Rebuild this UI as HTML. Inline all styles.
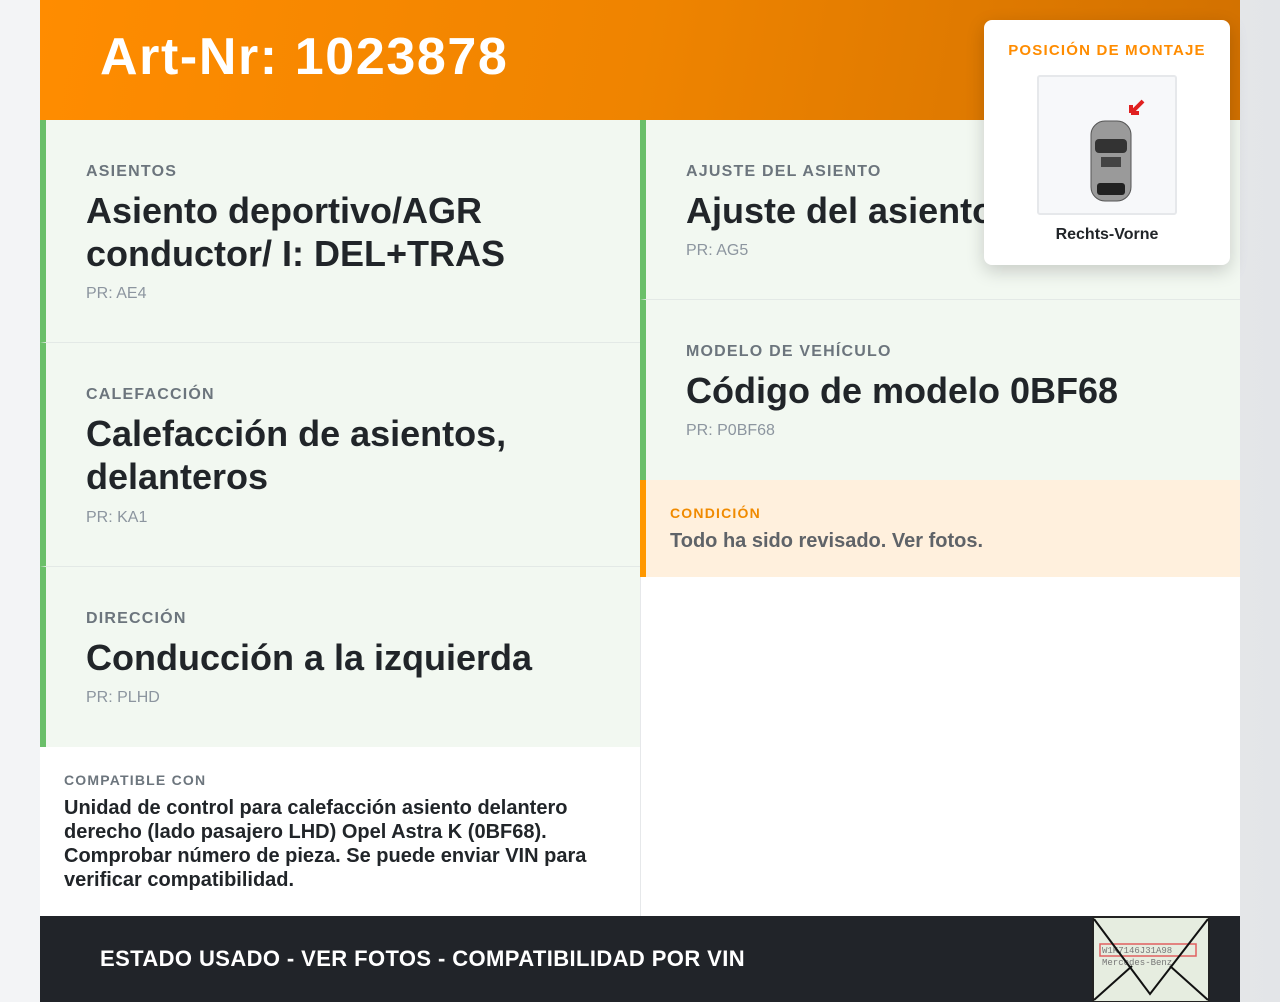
<!DOCTYPE html>
<html><head><meta charset="utf-8"><style>
*{margin:0;padding:0;box-sizing:border-box}
body{width:1280px;height:1002px;background:linear-gradient(90deg,#f3f4f6,#eef0f2 50%,#e3e5e8);font-family:"Liberation Sans",sans-serif;position:relative;overflow:hidden}
.page{position:absolute;left:40px;top:0;width:1200px;height:1002px;background:#fff}
.hdr{position:absolute;left:0;top:0;width:1200px;height:120px;background:linear-gradient(100deg,#ff8c00,#ef8400 50%,#d27100)}
.hdr h1{position:absolute;left:60px;top:27px;font-size:52px;color:#fff;font-weight:bold;letter-spacing:1.6px}
.card{position:absolute;background:#f2f8f1;border-left:6px solid #6abf69;border-bottom:1px solid #e3e9e6}
.lab{position:absolute;left:40px;font-size:16px;font-weight:bold;color:#6c757d;letter-spacing:1.2px}
.ttl{position:absolute;left:40px;font-size:36px;font-weight:bold;color:#212529;line-height:43px}
.pr{position:absolute;left:40px;font-size:16px;color:#8c959f}
.cond{position:absolute;left:600px;top:480px;width:600px;height:97px;background:#fff0dd;border-left:6px solid #ff9800}
.foot{position:absolute;left:0;top:916px;width:1200px;height:86px;background:#212429}
.foot span{position:absolute;left:60px;top:30px;color:#fff;font-size:22px;font-weight:bold;letter-spacing:0.4px}
.pop{position:absolute;left:984px;top:20px;width:246px;height:245px;background:#fff;border-radius:8px;box-shadow:0 6px 18px rgba(0,0,0,.18)}
</style></head><body>
<div class="page">
<div class="hdr"><h1>Art-Nr: 1023878</h1></div>
<div class="card" style="left:0;top:120px;width:600px;height:223px"><div class="lab" style="top:43px">ASIENTOS</div><div class="ttl" style="top:69px">Asiento deportivo/AGR<br>conductor/ I: DEL+TRAS</div><div class="pr" style="top:165px">PR: AE4</div></div>
<div class="card" style="left:0;top:343px;width:600px;height:224px"><div class="lab" style="top:43px">CALEFACCIÓN</div><div class="ttl" style="top:69px">Calefacción de asientos,<br>delanteros</div><div class="pr" style="top:166px">PR: KA1</div></div>
<div class="card" style="left:0;top:567px;width:600px;height:180px;border-bottom:none"><div class="lab" style="top:43px">DIRECCIÓN</div><div class="ttl" style="top:69px">Conducción a la izquierda</div><div class="pr" style="top:122px">PR: PLHD</div></div>
<div class="card" style="left:600px;top:120px;width:600px;height:180px"><div class="lab" style="top:43px">AJUSTE DEL ASIENTO</div><div class="ttl" style="top:69px">Ajuste del asiento</div><div class="pr" style="top:122px">PR: AG5</div></div>
<div class="card" style="left:600px;top:300px;width:600px;height:180px;border-bottom:none"><div class="lab" style="top:43px">MODELO DE VEHÍCULO</div><div class="ttl" style="top:69px">Código de modelo 0BF68</div><div class="pr" style="top:122px">PR: P0BF68</div></div>
<div class="cond"><div style="position:absolute;left:24px;top:25px;font-size:14px;font-weight:bold;color:#f08a00;letter-spacing:1.2px">CONDICIÓN</div><div style="position:absolute;left:24px;top:50px;font-size:20px;font-weight:bold;color:#5f6368">Todo ha sido revisado. Ver fotos.</div></div>
<div style="position:absolute;left:600px;top:577px;width:1px;height:339px;background:#e6e8ea"></div>
<div style="position:absolute;left:24px;top:772px;font-size:14px;font-weight:bold;color:#6c757d;letter-spacing:1.2px">COMPATIBLE CON</div>
<div style="position:absolute;left:24px;top:796px;width:560px;font-size:20px;font-weight:bold;color:#212529;line-height:24px">Unidad de control para calefacción asiento delantero derecho (lado pasajero LHD) Opel Astra K (0BF68). Comprobar número de pieza. Se puede enviar VIN para verificar compatibilidad.</div>
<div class="foot"><span>ESTADO USADO - VER FOTOS - COMPATIBILIDAD POR VIN</span>
<svg style="position:absolute;left:1052px;top:0" width="118" height="86" viewBox="0 0 118 86"><rect x="1" y="1" width="116" height="85" fill="#e6ede0" stroke="#222" stroke-width="2"/><rect x="8" y="28" width="96" height="12" fill="none" stroke="#e06060" stroke-width="1.5"/><text x="10" y="37" font-size="9" fill="#777" font-family="Liberation Mono">W1K7146J31A98</text><text x="10" y="49" font-size="9" fill="#777" font-family="Liberation Mono">Mercedes-Benz</text><path d="M2 3 L58 78 L116 3 M2 84 L40 50 M116 84 L78 50" fill="none" stroke="#111" stroke-width="2"/></svg></div>
</div>
<div class="pop">
<div style="position:absolute;left:0;width:246px;top:22px;text-align:center;font-size:15px;font-weight:bold;color:#ff8c00;letter-spacing:1.2px">POSICIÓN DE MONTAJE</div>
<div style="position:absolute;left:53px;top:55px;width:140px;height:140px;background:#f7f8fa;border:2px solid #e6e8eb;border-radius:3px">
<svg width="136" height="136" viewBox="0 0 136 136"><rect x="52" y="44" width="40" height="80" rx="14" fill="#9a9a9a" stroke="#555"/><rect x="56" y="62" width="32" height="14" rx="4" fill="#333"/><rect x="62" y="80" width="20" height="10" fill="#444"/><rect x="58" y="106" width="28" height="12" rx="3" fill="#222"/><path d="M104 24 L92 36 M92 36 L92 28 M92 36 L100 36" stroke="#e02020" stroke-width="4" fill="none"/></svg></div>
<div style="position:absolute;left:0;width:246px;top:206px;text-align:center;font-size:16px;font-weight:bold;color:#212529">Rechts-Vorne</div>
</div>
</body></html>
